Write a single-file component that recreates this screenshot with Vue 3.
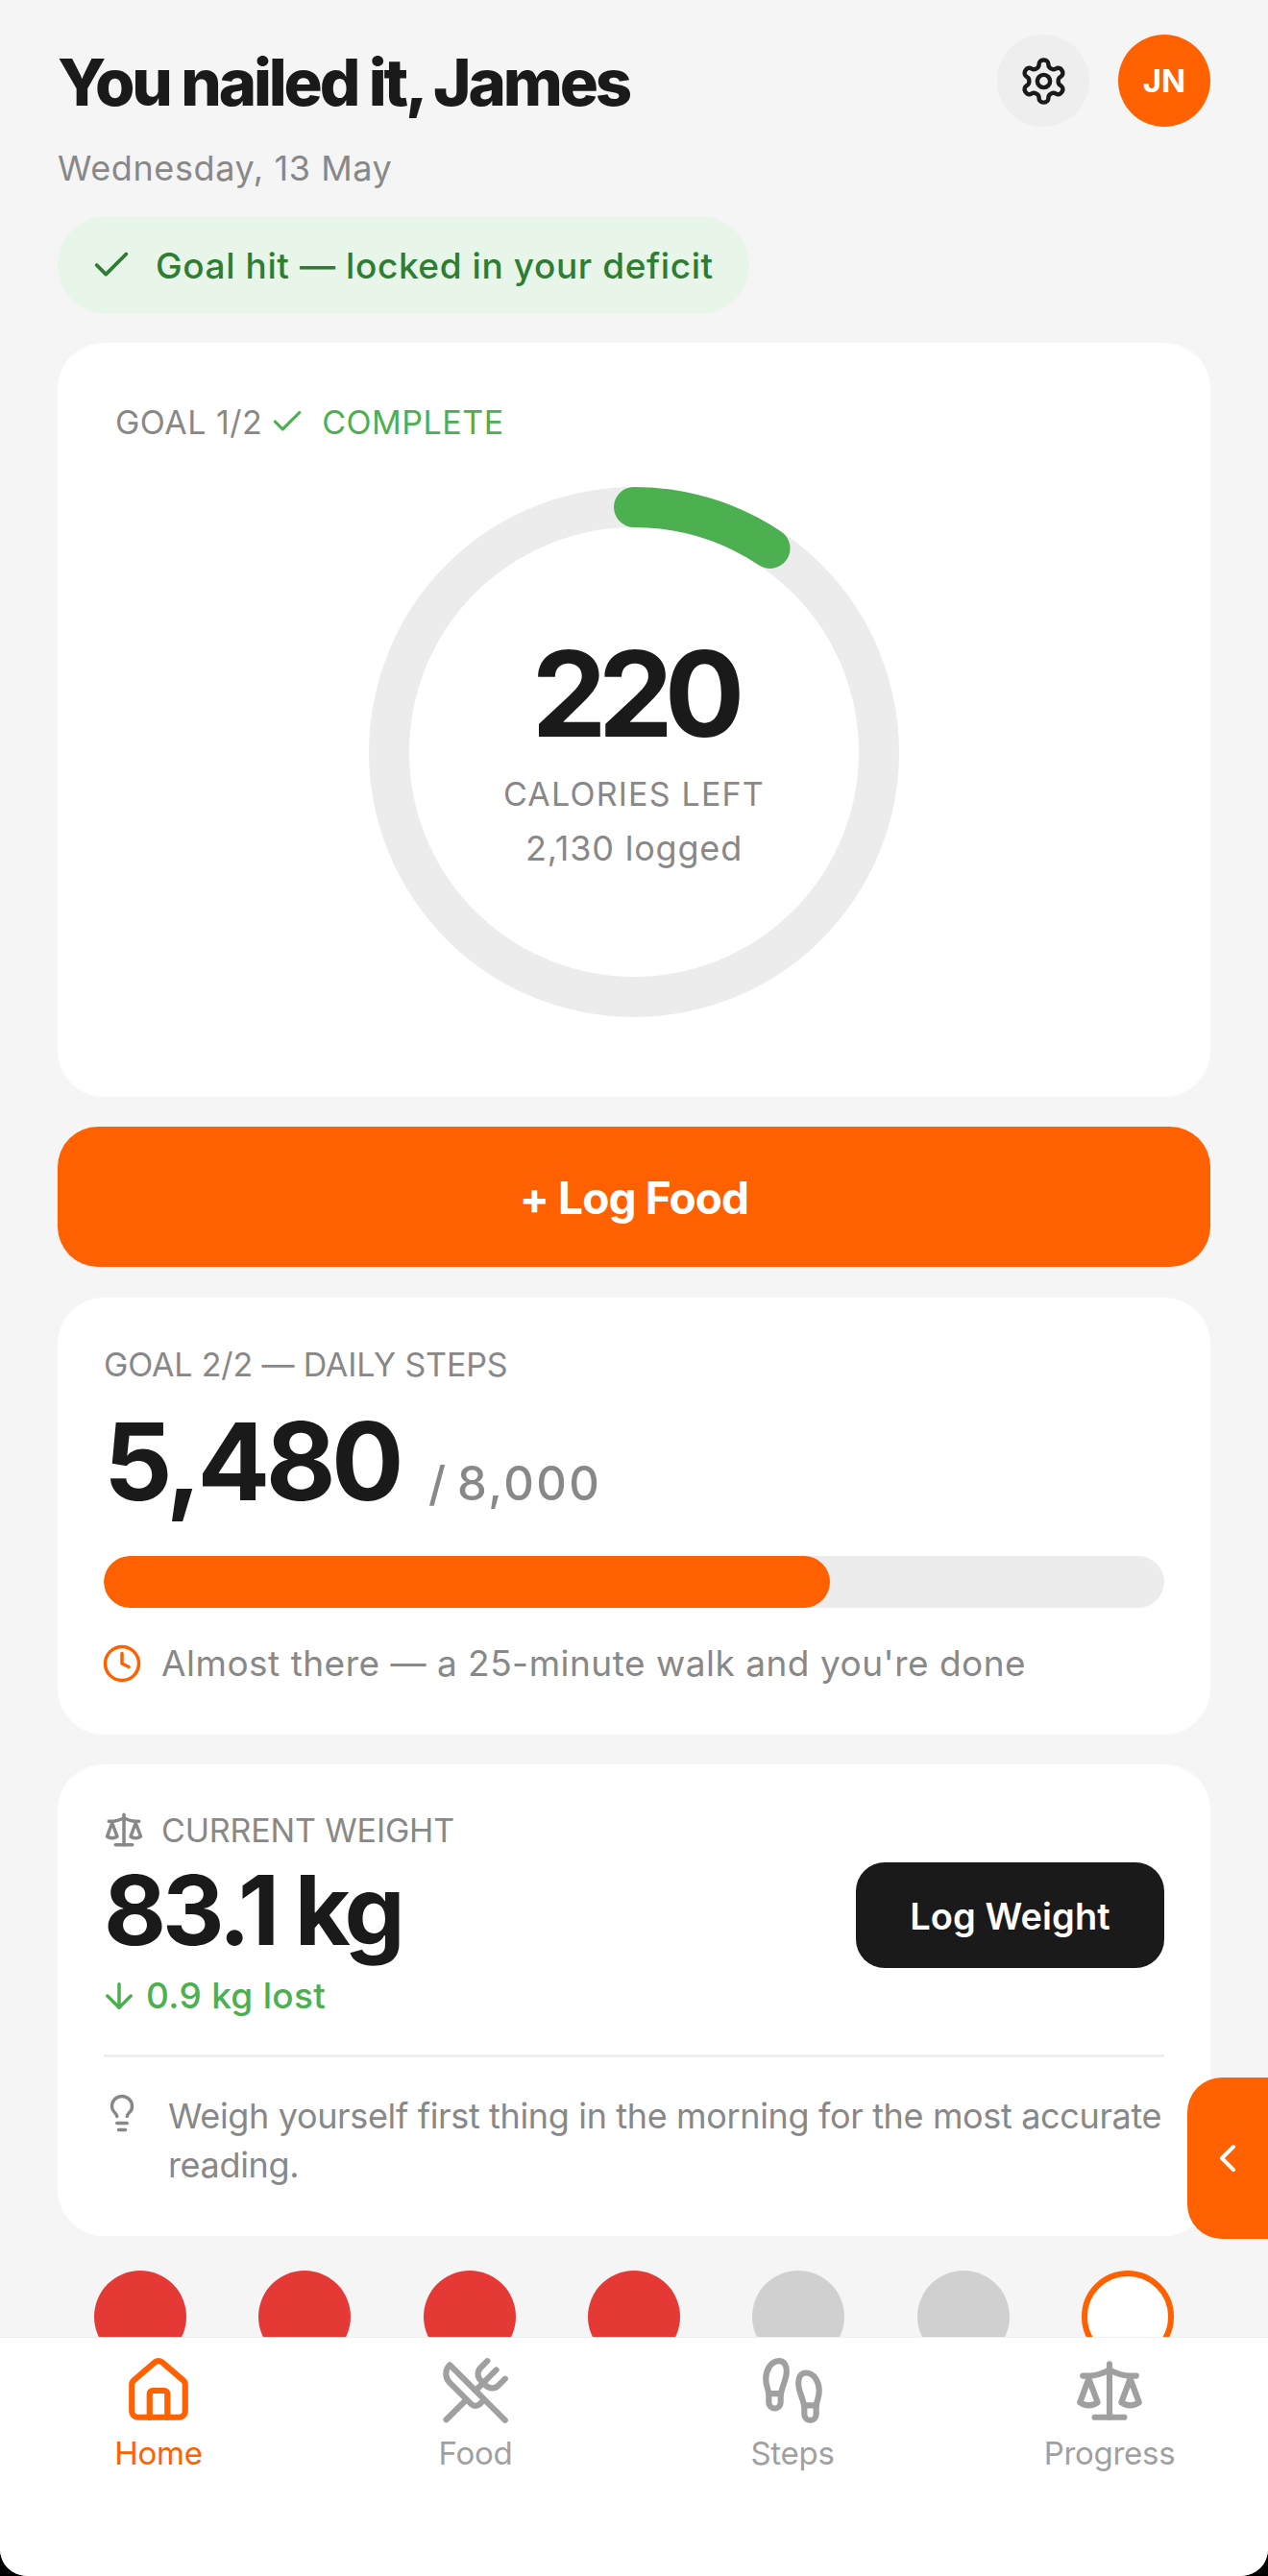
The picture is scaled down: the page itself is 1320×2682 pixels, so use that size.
<script setup>
import { computed } from 'vue';

const calories = { goal: 2350, logged: 2130 };
const steps = { count: 5480, goal: 8000 };

const radius = 255;
const circumference = 2 * Math.PI * radius;
const ringDash = computed(() => {
  const left = calories.goal - calories.logged;
  return `${(left / calories.goal) * circumference} ${circumference}`;
});

const stepsPct = computed(() => (steps.count / steps.goal) * 100);

// last seven days, oldest first
const days = ['miss', 'miss', 'miss', 'miss', 'empty', 'empty', 'today'];

const tabs = [
  { label: 'Home', icon: 'home', active: true },
  { label: 'Food', icon: 'food' },
  { label: 'Steps', icon: 'steps' },
  { label: 'Progress', icon: 'scale' }
];
</script>

<template>
  <div class="screen">
    <main class="content">
      <header class="top">
        <h1>You nailed it, James</h1>
        <div class="top-actions">
          <button class="round gear">
            <svg width="53" height="53" viewBox="0 0 24 24" fill="none" stroke="#1a1a1a" stroke-width="2" stroke-linecap="round" stroke-linejoin="round">
              <path d="M12.22 2h-.44a2 2 0 0 0-2 2v.18a2 2 0 0 1-1 1.73l-.43.25a2 2 0 0 1-2 0l-.15-.08a2 2 0 0 0-2.73.73l-.22.38a2 2 0 0 0 .73 2.73l.15.1a2 2 0 0 1 1 1.72v.51a2 2 0 0 1-1 1.74l-.15.09a2 2 0 0 0-.73 2.73l.22.38a2 2 0 0 0 2.73.73l.15-.08a2 2 0 0 1 2 0l.43.25a2 2 0 0 1 1 1.73V20a2 2 0 0 0 2 2h.44a2 2 0 0 0 2-2v-.18a2 2 0 0 1 1-1.73l.43-.25a2 2 0 0 1 2 0l.15.08a2 2 0 0 0 2.73-.73l.22-.39a2 2 0 0 0-.73-2.73l-.15-.08a2 2 0 0 1-1-1.74v-.5a2 2 0 0 1 1-1.74l.15-.09a2 2 0 0 0 .73-2.73l-.22-.38a2 2 0 0 0-2.73-.73l-.15.08a2 2 0 0 1-2 0l-.43-.25a2 2 0 0 1-1-1.73V4a2 2 0 0 0-2-2z" />
              <circle cx="12" cy="12" r="3" />
            </svg>
          </button>
          <div class="round avatar">JN</div>
        </div>
      </header>
      <p class="date">Wednesday, 13 May</p>

      <div class="pill">
        <svg width="46" height="46" viewBox="0 0 24 24" fill="none" stroke="#2e7d32" stroke-width="2" stroke-linecap="round" stroke-linejoin="round">
          <path d="M20 6 9 17l-5-5" />
        </svg>
        <span>Goal hit — locked in your deficit</span>
      </div>

      <section class="card ring-card">
        <div class="goal-row">
          <span>GOAL 1/2</span>
          <svg width="38" height="38" viewBox="0 0 24 24" fill="none" stroke="#4caf50" stroke-width="2" stroke-linecap="round" stroke-linejoin="round">
            <path d="M20 6 9 17l-5-5" />
          </svg>
          <span class="complete">COMPLETE</span>
        </div>
        <div class="ring">
          <svg width="552" height="552" viewBox="0 0 552 552" fill="none">
            <circle cx="276" cy="276" :r="radius" stroke="#ececec" stroke-width="42" />
            <circle
              cx="276"
              cy="276"
              :r="radius"
              stroke="#4caf50"
              stroke-width="42"
              stroke-linecap="round"
              :stroke-dasharray="ringDash"
              transform="rotate(-90 276 276)"
            />
          </svg>
          <div class="ring-text">
            <div class="ring-num">220</div>
            <div class="ring-label">CALORIES LEFT</div>
            <div class="ring-sub">2,130 logged</div>
          </div>
        </div>
      </section>

      <button class="log-food">+ Log Food</button>

      <section class="card steps-card">
        <div class="label">GOAL 2/2 — DAILY STEPS</div>
        <div class="steps-line">
          <span class="big">5,480</span>
          <span class="of">/ 8,000</span>
        </div>
        <div class="track">
          <div class="fill" :style="{ width: stepsPct + '%' }"></div>
        </div>
        <div class="hint">
          <svg width="42" height="42" viewBox="0 0 24 24" fill="none" stroke="#ff6000" stroke-width="2" stroke-linecap="round" stroke-linejoin="round">
            <circle cx="12" cy="12" r="10" />
            <polyline points="12 6 12 12 16 14" />
          </svg>
          <span>Almost there — a 25-minute walk and you're done</span>
        </div>
      </section>

      <section class="card weight-card">
        <div class="weight-row">
          <div>
            <div class="label with-icon">
              <svg width="42" height="42" viewBox="0 0 24 24" fill="none" stroke="#888888" stroke-width="2" stroke-linecap="round" stroke-linejoin="round">
                <path d="m16 16 3-8 3 8c-.87.65-1.92 1-3 1s-2.13-.35-3-1Z" />
                <path d="m2 16 3-8 3 8c-.87.65-1.92 1-3 1s-2.13-.35-3-1Z" />
                <path d="M7 21h10" />
                <path d="M12 3v18" />
                <path d="M3 7h2c2 0 5-1 7-2 2 1 5 2 7 2h2" />
              </svg>
              <span>CURRENT WEIGHT</span>
            </div>
            <div class="big weight">83.1 kg</div>
            <div class="lost">
              <svg width="42" height="42" viewBox="0 0 24 24" fill="none" stroke="#4caf50" stroke-width="2" stroke-linecap="round" stroke-linejoin="round">
                <path d="M12 5v14" />
                <path d="m19 12-7 7-7-7" />
              </svg>
              <span>0.9 kg lost</span>
            </div>
          </div>
          <button class="log-weight">Log Weight</button>
        </div>
        <div class="tip">
          <svg width="42" height="42" viewBox="0 0 24 24" fill="none" stroke="#888888" stroke-width="2" stroke-linecap="round" stroke-linejoin="round">
            <path d="M15 14c.2-1 .7-1.7 1.5-2.5 1-.9 1.5-2.2 1.5-3.5A6 6 0 0 0 6 8c0 1 .2 2.2 1.5 3.5.7.7 1.3 1.5 1.5 2.5" />
            <path d="M9 18h6" />
            <path d="M10 22h4" />
          </svg>
          <p>Weigh yourself first thing in the morning for the most accurate reading.</p>
        </div>
      </section>

      <div class="days">
        <span v-for="(d, i) in days" :key="i" class="day" :class="d"></span>
      </div>

      <!-- slide-out drawer handle -->
      <button class="handle">
        <svg width="48" height="48" viewBox="0 0 24 24" fill="none" stroke="#ffffff" stroke-width="2" stroke-linecap="round" stroke-linejoin="round">
          <path d="m15 18-6-6 6-6" />
        </svg>
      </button>
    </main>

    <nav class="tabs">
      <div v-for="t in tabs" :key="t.label" class="tab" :class="{ active: t.active }">
        <svg width="74" height="74" viewBox="0 0 24 24" fill="none" stroke="currentColor" stroke-width="2" stroke-linecap="round" stroke-linejoin="round">
          <template v-if="t.icon === 'home'">
            <path d="M15 21v-8a1 1 0 0 0-1-1h-4a1 1 0 0 0-1 1v8" />
            <path d="M3 10a2 2 0 0 1 .709-1.528l7-5.999a2 2 0 0 1 2.582 0l7 5.999A2 2 0 0 1 21 10v9a2 2 0 0 1-2 2H5a2 2 0 0 1-2-2z" />
          </template>
          <template v-else-if="t.icon === 'food'">
            <path d="m16 2-2.3 2.3a3 3 0 0 0 0 4.2l1.8 1.8a3 3 0 0 0 4.2 0L22 8" />
            <path d="M15 15 3.3 3.3a4.2 4.2 0 0 0 0 6l7.3 7.3c.7.7 2 .7 2.8 0L15 15Zm0 0 7 7" />
            <path d="m2.1 21.8 6.4-6.3" />
            <path d="m19 5-7 7" />
          </template>
          <template v-else-if="t.icon === 'steps'">
            <path d="M4 16v-2.38C4 11.5 2.97 10.5 3 8c.03-2.72 1.49-6 4.5-6C9.37 2 10 3.8 10 5.5c0 3.11-2 5.66-2 8.68V16a2 2 0 1 1-4 0Z" />
            <path d="M20 20v-2.38c0-2.12 1.03-3.12 1-5.62-.03-2.72-1.49-6-4.5-6C14.63 6 14 7.8 14 9.5c0 3.11 2 5.66 2 8.68V20a2 2 0 1 0 4 0Z" />
            <path d="M16 17h4" />
            <path d="M4 13h4" />
          </template>
          <template v-else>
            <path d="m16 16 3-8 3 8c-.87.65-1.92 1-3 1s-2.13-.35-3-1Z" />
            <path d="m2 16 3-8 3 8c-.87.65-1.92 1-3 1s-2.13-.35-3-1Z" />
            <path d="M7 21h10" />
            <path d="M12 3v18" />
            <path d="M3 7h2c2 0 5-1 7-2 2 1 5 2 7 2h2" />
          </template>
        </svg>
        <span>{{ t.label }}</span>
      </div>
    </nav>
  </div>
</template>

<style>
html,
body {
  background: #000;
}
</style>

<style scoped>
* {
  box-sizing: border-box;
}

.screen {
  position: relative;
  width: 1320px;
  height: 2682px;
  display: flex;
  flex-direction: column;
  overflow: hidden;
  background: #f5f5f5;
  border-radius: 0 0 28px 28px;
  font-family: Inter, "Liberation Sans", sans-serif;
  color: #1a1a1a;
}

.content {
  position: relative;
  flex: 1;
  min-height: 0;
  overflow: hidden;
  padding: 36px 60px 0;
}

button {
  border: none;
  font-family: inherit;
  padding: 0;
}

.top {
  display: flex;
  align-items: center;
  justify-content: space-between;
  height: 96px;
}

h1 {
  margin: 4px 0 0;
  font-size: 67px;
  font-weight: 800;
  letter-spacing: -3.15px;
  line-height: 92px;
}

.top-actions {
  display: flex;
  gap: 30px;
}

.round {
  width: 96px;
  height: 96px;
  border-radius: 50%;
  display: flex;
  align-items: center;
  justify-content: center;
}

.gear {
  background: #eeeeee;
}

.avatar {
  background: #ff6000;
  color: #fff;
  font-size: 33px;
  font-weight: 700;
}

.date {
  margin: 18px 0 0;
  font-size: 36px;
  line-height: 50px;
  color: #888;
  letter-spacing: 0.6px;
}

.pill {
  display: inline-flex;
  align-items: center;
  gap: 23px;
  width: 720px;
  height: 102px;
  margin-top: 25px;
  padding-left: 33px;
  border-radius: 51px;
  background: #e8f5e9;
  color: #2e7d32;
  font-size: 37px;
  font-weight: 500;
  letter-spacing: 0.6px;
  white-space: nowrap;
}

.card {
  background: #fff;
  border-radius: 48px;
}

.ring-card {
  height: 785px;
  margin-top: 30px;
  padding: 61px 60px 0;
}

.goal-row {
  display: flex;
  align-items: center;
  height: 42px;
  font-size: 34px;
  color: #888;
  letter-spacing: 0.5px;
}

.goal-row svg {
  margin-left: 7px;
}

.complete {
  margin-left: 17px;
  color: #4caf50;
}

.ring {
  position: relative;
  width: 552px;
  height: 552px;
  margin: 47px auto 0;
}

.ring-text {
  position: absolute;
  inset: 0;
  display: flex;
  flex-direction: column;
  align-items: center;
  padding-top: 140px;
}

.ring-num {
  font-size: 124px;
  font-weight: 700;
  line-height: 150px;
  letter-spacing: -9px;
}

.ring-label {
  margin-top: 7px;
  font-size: 34px;
  line-height: 46px;
  color: #888;
  letter-spacing: 1.2px;
}

.ring-sub {
  margin-top: 10px;
  font-size: 36px;
  line-height: 46px;
  color: #888;
  letter-spacing: 0.8px;
}

.log-food {
  display: block;
  width: 100%;
  height: 146px;
  margin-top: 31px;
  padding-top: 2px;
  border-radius: 42px;
  background: #ff6000;
  color: #fff;
  font-size: 46px;
  font-weight: 700;
  letter-spacing: -0.9px;
}

.steps-card {
  height: 455px;
  margin-top: 32px;
  padding: 48px 48px 0;
}

.label {
  font-size: 34px;
  line-height: 44px;
  color: #888;
  letter-spacing: -0.15px;
}

.steps-line {
  display: flex;
  align-items: baseline;
  gap: 30px;
  margin-top: 13px;
  height: 130px;
}

.big {
  font-size: 112px;
  font-weight: 700;
  line-height: 130px;
  letter-spacing: -4.5px;
}

.of {
  font-size: 49px;
  font-weight: 500;
  color: #888;
  word-spacing: -6px;
  letter-spacing: 2.4px;
}

.track {
  height: 54px;
  margin-top: 34px;
  border-radius: 27px;
  background: #ececec;
  overflow: hidden;
}

.fill {
  height: 100%;
  border-radius: 27px;
  background: #ff6000;
}

.hint {
  display: flex;
  align-items: center;
  gap: 20px;
  margin-top: 35px;
  margin-left: -2px;
  font-size: 37px;
  color: #888;
  letter-spacing: 0.5px;
}

.weight-card {
  height: 491px;
  margin-top: 31px;
  padding: 46px 48px 0;
}

.weight-row {
  display: flex;
  align-items: flex-start;
  justify-content: space-between;
  height: 259px;
  border-bottom: 3px solid #eeeeee;
}

.with-icon {
  display: flex;
  align-items: center;
  gap: 18px;
  height: 44px;
}

.with-icon span {
  margin-top: 2px;
}

.weight {
  margin-top: 4px;
  font-size: 100px;
  line-height: 116px;
  letter-spacing: -4px;
}

.lost {
  display: flex;
  align-items: center;
  gap: 7px;
  margin: 8px 0 0 -5px;
  font-size: 37px;
  font-weight: 500;
  color: #4caf50;
  letter-spacing: 0.3px;
}

.log-weight {
  width: 321px;
  height: 110px;
  margin-top: 56px;
  padding-top: 2px;
  border-radius: 30px;
  background: #1a1a1a;
  color: #fff;
  font-size: 38px;
  font-weight: 600;
  letter-spacing: 0.1px;
}

.tip {
  display: flex;
  gap: 27px;
  margin-top: 37px;
}

.tip svg {
  flex: none;
  margin-left: -2px;
}

.tip p {
  margin: -1px -8px 0 0;
  font-size: 36px;
  line-height: 51px;
  color: #888;
  letter-spacing: -0.35px;
}

.days {
  display: flex;
  justify-content: space-between;
  margin-top: 36px;
  padding: 0 38px;
}

.day {
  width: 96px;
  height: 96px;
  border-radius: 50%;
  flex: none;
}

.miss {
  background: #e53935;
}

.empty {
  background: #d0d0d0;
}

.today {
  background: #fff;
  border: 6px solid #ff6000;
}

.handle {
  position: absolute;
  right: 0;
  top: 2163px;
  width: 84px;
  height: 168px;
  display: flex;
  align-items: center;
  justify-content: center;
  border-radius: 36px 0 0 36px;
  background: #ff6000;
}

.tabs {
  display: grid;
  grid-template-columns: repeat(4, 1fr);
  flex: none;
  height: 249px;
  border-top: 1px solid #eeeeee;
  background: #fff;
}

.tab {
  display: flex;
  flex-direction: column;
  align-items: center;
  padding-top: 18px;
  color: #a0a0a0;
  font-size: 33px;
  line-height: 44px;
  letter-spacing: -0.3px;
}

.tab span {
  margin-top: 6px;
}

.tab.active {
  color: #ff6000;
}
</style>
